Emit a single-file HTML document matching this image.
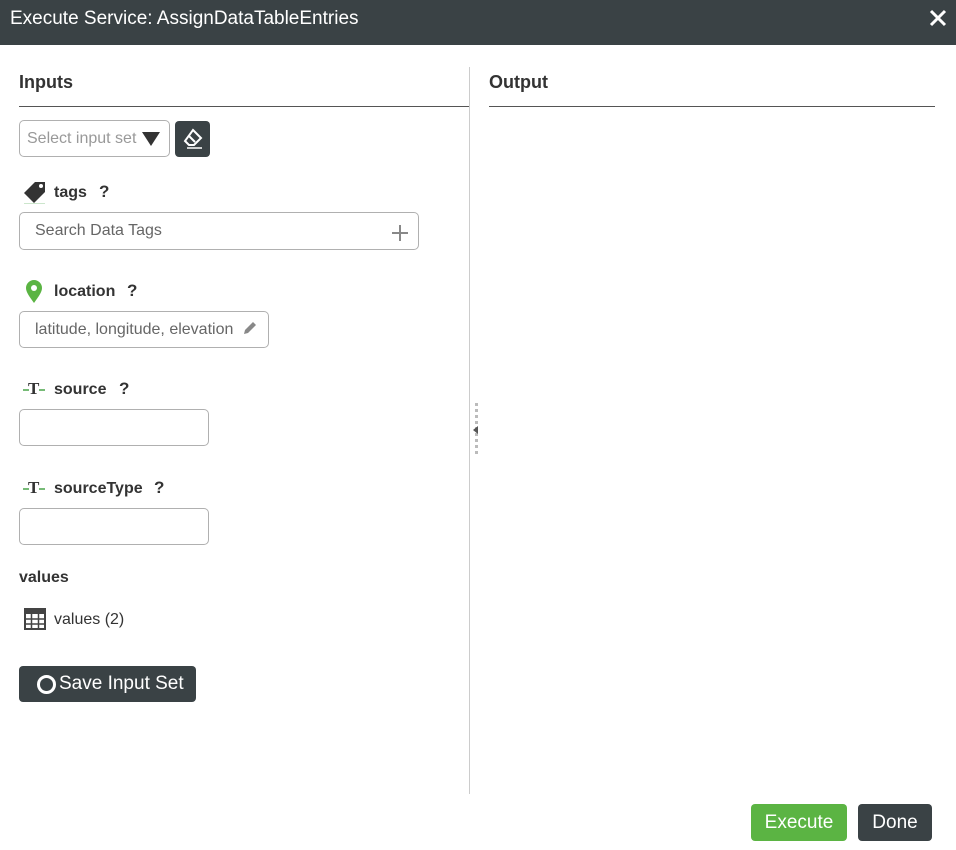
<!DOCTYPE html>
<html><head><style>
*{box-sizing:border-box;margin:0;padding:0}
body{width:956px;height:850px;background:#fff;font-family:"Liberation Sans",Arial,sans-serif;position:relative;overflow:hidden;color:#333}
.a{position:absolute}
.hdr{left:0;top:0;width:956px;height:45px;background:#3a4245;color:#fff;font-size:19px;line-height:37px;padding-left:10px}
.h2{font-size:18px;font-weight:bold;color:#333}
.lbl{font-size:16px;font-weight:bold;color:#333}
.q{font-size:17px;font-weight:bold;color:#333}
.inp{border:1px solid #b0b0b0;border-radius:5px;background:#fff}
.ph{font-size:16px;color:#666}
.btn{border-radius:4px;color:#fff;font-size:19px;text-align:center}
.tt{font:bold 17px 'Liberation Serif',serif;color:#333}
.tl{position:absolute;height:1.5px;width:6px;background:#7b7;top:10px}
</style></head><body>
<div class="a hdr">Execute Service: AssignDataTableEntries</div>
<svg class="a" style="left:929px;top:9px" width="18" height="18" viewBox="0 0 18 18"><path d="M2 2L16 16M16 2L2 16" stroke="#fff" stroke-width="3"/></svg>

<div class="a h2" style="left:19px;top:72px">Inputs</div>
<div class="a" style="left:19px;top:106px;width:450px;height:1px;background:#555"></div>
<div class="a h2" style="left:489px;top:72px">Output</div>
<div class="a" style="left:489px;top:106px;width:446px;height:1px;background:#555"></div>
<div class="a" style="left:469px;top:67px;width:1px;height:727px;background:#ccc"></div>
<div class="a" style="left:475px;top:403px;width:3px;height:54px;background:repeating-linear-gradient(#bbb 0 3px,transparent 3px 6px)"></div>
<div class="a" style="left:473px;top:426px;width:0;height:0;border-top:4px solid transparent;border-bottom:4px solid transparent;border-right:5px solid #555"></div>

<div class="a inp" style="left:19px;top:120px;width:151px;height:37px"></div>
<div class="a" style="left:27px;top:130px;font-size:16px;color:#999">Select input set</div>
<div class="a" style="left:142px;top:132px;width:0;height:0;border-left:9px solid transparent;border-right:9px solid transparent;border-top:14px solid #333"></div>
<div class="a" style="left:175px;top:121px;width:35px;height:36px;background:#3a4245;border-radius:4px"></div>
<svg class="a" style="left:182px;top:128px" width="22" height="22" viewBox="0 0 22 22"><path d="M11 2L19 10L12 17H7L3 13Z" fill="none" stroke="#fff" stroke-width="2"/><path d="M7 8L13 14" stroke="#fff" stroke-width="2"/><path d="M5 20H20" stroke="#fff" stroke-width="1.5"/></svg>

<svg class="a" style="left:23px;top:180px" width="24" height="24" viewBox="0 0 24 24"><path d="M12 2H22V12L11 23L1 13Z" fill="#333"/><circle cx="18" cy="6" r="2" fill="#fff"/><path d="M1 24H22" stroke="#9c9" stroke-width="1"/></svg>
<div class="a lbl" style="left:54px;top:184px">tags</div>
<div class="a q" style="left:99px;top:182px">?</div>
<div class="a inp" style="left:19px;top:212px;width:400px;height:38px"></div>
<div class="a ph" style="left:35px;top:222px">Search Data Tags</div>
<svg class="a" style="left:391px;top:224px" width="18" height="18"><path d="M9 1V17M1 9H17" stroke="#888" stroke-width="2"/></svg>

<svg class="a" style="left:25px;top:280px" width="18" height="24" viewBox="0 0 18 24"><path d="M9 23C4 16 1 12 1 8A8 8 0 0 1 17 8C17 12 14 16 9 23Z" fill="#5bb443"/><circle cx="9" cy="8" r="3" fill="#fff"/></svg>
<div class="a lbl" style="left:54px;top:283px">location</div>
<div class="a q" style="left:127px;top:281px">?</div>
<div class="a inp" style="left:19px;top:311px;width:250px;height:37px"></div>
<div class="a ph" style="left:35px;top:321px">latitude, longitude, elevation</div>
<svg class="a" style="left:242px;top:320px" width="16" height="16"><path d="M2 14L3 10L11 2L14 5L6 13Z" fill="#888"/></svg>

<div class="a" style="left:23px;top:379px;width:22px;height:22px"><div class="tl" style="left:0"></div><div class="tl" style="left:16px"></div><div class="tt" style="position:absolute;left:5px;top:0">T</div></div>
<div class="a lbl" style="left:54px;top:381px">source</div>
<div class="a q" style="left:119px;top:379px">?</div>
<div class="a inp" style="left:19px;top:409px;width:190px;height:37px"></div>

<div class="a" style="left:23px;top:478px;width:22px;height:22px"><div class="tl" style="left:0"></div><div class="tl" style="left:16px"></div><div class="tt" style="position:absolute;left:5px;top:0">T</div></div>
<div class="a lbl" style="left:54px;top:480px">sourceType</div>
<div class="a q" style="left:154px;top:478px">?</div>
<div class="a inp" style="left:19px;top:508px;width:190px;height:37px"></div>

<div class="a lbl" style="left:19px;top:569px">values</div>
<svg class="a" style="left:24px;top:608px" width="22" height="22" viewBox="0 0 22 22"><rect x="1" y="1" width="20" height="20" fill="none" stroke="#444" stroke-width="2"/><rect x="1" y="1" width="20" height="5" fill="#444"/><path d="M7.5 6V21M14.5 6V21M1 11H21M1 16H21" stroke="#444" stroke-width="1.5"/></svg>
<div class="a" style="left:54px;top:611px;font-size:16px;color:#333">values (2)</div>

<div class="a btn" style="left:19px;top:666px;width:177px;height:36px;background:#3a4245"></div>
<div class="a" style="left:37px;top:675px;width:19px;height:19px;border:3px solid #fff;border-radius:50%"></div>
<div class="a" style="left:59px;top:673px;font-size:19px;color:#fff">Save Input Set</div>

<div class="a btn" style="left:751px;top:804px;width:96px;height:37px;background:#5bb443;line-height:37px">Execute</div>
<div class="a btn" style="left:858px;top:804px;width:74px;height:37px;background:#3a4245;line-height:37px">Done</div>
</body></html>
